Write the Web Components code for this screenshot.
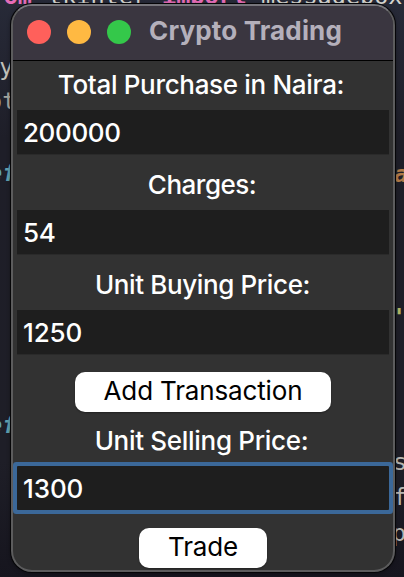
<!DOCTYPE html>
<html lang="en"><head><meta charset="utf-8"><title>Crypto Trading</title>
<style>html,body{margin:0;width:404px;height:577px;overflow:hidden;background:#1e1e28}</style></head>
<body>
<trading-desktop>
<code-fragment slot="code" style="left:-10.5px;top:-18.5px;color:#e56cb7;font-weight:bold">rom</code-fragment>
<code-fragment slot="code" style="left:48px;top:-18.5px;color:#d5d5cf">tkinter</code-fragment>
<code-fragment slot="code" style="left:162px;top:-18.5px;color:#e56cb7;font-weight:bold">import</code-fragment>
<code-fragment slot="code" style="left:261px;top:-18.5px;color:#d5d5cf">messagebox</code-fragment>
<code-fragment slot="code" style="left:-15px;top:53px;color:#c2c1ba">ry</code-fragment>
<code-fragment slot="code" style="left:-12px;top:87px;color:#a6a79f">ot</code-fragment>
<code-fragment slot="code" style="left:-12px;top:159px;color:#5fa0af;font-style:italic;font-weight:bold">ef</code-fragment>
<code-fragment slot="code" style="left:-12px;top:411px;color:#5fa0af;font-style:italic;font-weight:bold">ef</code-fragment>
<code-fragment slot="code" style="left:394px;top:160px;color:#b17b48;font-style:italic;font-weight:bold">a</code-fragment>
<code-fragment slot="code" style="left:392px;top:303px;color:#b0b765;font-weight:bold">'</code-fragment>
<code-fragment slot="code" style="left:393px;top:448px;color:#b6b5b1">s</code-fragment>
<code-fragment slot="code" style="left:393px;top:483px;color:#b6b5b1">f</code-fragment>
<code-fragment slot="code" style="left:392px;top:519px;color:#b6b5b1">p</code-fragment>
<app-window>
<title-bar slot="title">Crypto Trading</title-bar>
<field-label style="letter-spacing:-.32px;--shift:-4px">Total Purchase in Naira:</field-label><entry-field value="200000" style="letter-spacing:-.4px"></entry-field>
<field-label class="gap" style="letter-spacing:-.5px">Charges:</field-label><entry-field value="54"></entry-field>
<field-label class="gap" style="letter-spacing:-.38px;--shift:-1px">Unit Buying Price:</field-label><entry-field value="1250" style="letter-spacing:-.1px"></entry-field>
<push-button style="--w:256px;margin-top:17px">Add Transaction</push-button>
<field-label class="short" style="letter-spacing:-.3px;--shift:-3px">Unit Selling Price:</field-label><entry-field focused value="1300" style="letter-spacing:-.1px"></entry-field>
<push-button style="--w:128px;margin-top:18px">Trade</push-button>
</app-window>
</trading-desktop>
<script>
const define=(name,html,setup)=>customElements.define(name,class extends HTMLElement{
 constructor(){super();this.attachShadow({mode:'open'}).innerHTML=html;}
 connectedCallback(){if(setup)setup(this,this.shadowRoot);}
});
define('code-fragment',`<style>:host{position:absolute;display:block;font:23.5px/28px "DejaVu Sans Mono",monospace;white-space:pre}</style><slot></slot>`);
define('trading-desktop',`<style>:host{display:block;position:relative;box-sizing:border-box;width:404px;height:577px;padding:4px 9px 5px 11px;overflow:hidden;background:linear-gradient(#272a38,#1e1e28 24%,#1e1e27 80%,#16151e)}</style><slot name="code"></slot><slot></slot>`);
define('app-window',`<style>:host{display:block;position:relative;box-sizing:border-box;height:568px;border:2px solid #5c5c5d;border-top-color:#77767c;border-radius:21px;background:#323232;overflow:hidden;box-shadow:0 0 0 1px #050507,0 1px 4px #0008}
main{display:flex;flex-direction:column;align-items:center}</style><slot name="title"></slot><main><slot></slot></main>`);
define('title-bar',`<style>:host{display:flex;box-sizing:border-box;height:55px;align-items:center;padding:0 0 2px 14px;background:#3a3640;border-bottom:1px solid #000;color:#b4b0bb;font:650 26px/32px Inter,sans-serif}
.lights{display:flex;gap:16px;margin-right:18px}i{width:24px;height:24px;border-radius:50%;background:#ff605b}i:nth-child(2){background:#ffb942}i:nth-child(3){background:#34c84a}span{display:block;letter-spacing:.15px;white-space:nowrap;margin-bottom:2px}</style><div class="lights"><i></i><i></i><i></i></div><span><slot></slot></span>`);
define('field-label',`<style>:host{display:block;height:49px;font:450 26px/32px Inter,sans-serif;color:#fff;padding-top:8px;box-sizing:border-box;white-space:nowrap;align-self:stretch;text-align:center}
:host(.gap){height:55px;padding-top:14px}:host(.short){height:54px;padding-top:13px}span{display:block;margin-left:var(--shift,-2px)}</style><span><slot></slot></span>`);
define('entry-field',`<style>:host{display:flex;box-sizing:border-box;width:372px;height:45px;align-items:center;padding:2px 0 0 6px;background:#1e1e1e;color:#fff;font:450 26px/32px Inter,sans-serif;letter-spacing:-.4px;border-bottom:1px solid #2a2a2a}
:host([focused]){height:44px;border:0;box-shadow:0 0 0 4px #3b6899;border-radius:1px}</style><span></span>`,(el,r)=>r.querySelector('span').textContent=el.getAttribute('value'));
define('push-button',`<style>:host{display:block;width:var(--w)}button{display:block;width:100%;height:40px;padding:0 0 2px;border:0;border-radius:10px;background:#fff;color:#000;font:430 26px/32px Inter,sans-serif;letter-spacing:-.15px;box-shadow:0 1px 2px #0005}</style><button><slot></slot></button>`);
</script></body></html>
